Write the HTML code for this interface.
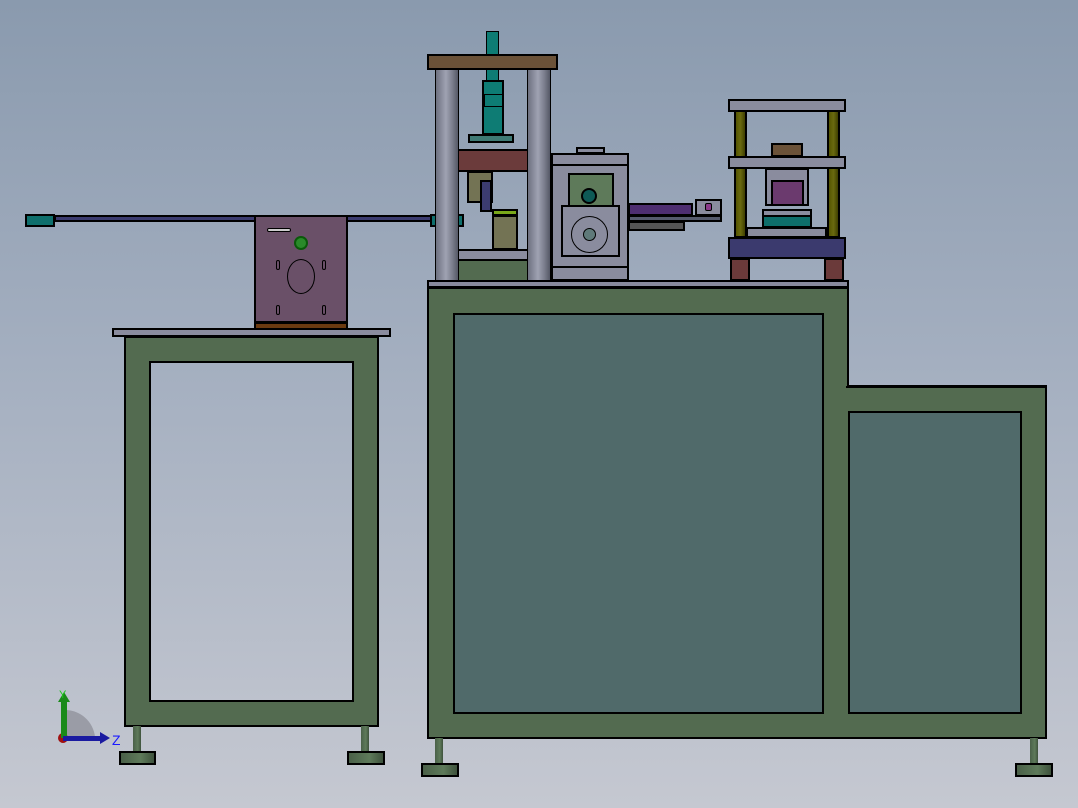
<!DOCTYPE html>
<html><head><style>
html,body{margin:0;width:1078px;height:808px;overflow:hidden;}
body{background:linear-gradient(#8a9aae,#a4afc0 45%,#c5c8d1) fixed;position:relative;font-family:"Liberation Sans",sans-serif;}
.b{position:absolute;box-sizing:border-box;border:2px solid #000;}
.n{position:absolute;box-sizing:border-box;}
.win{background:linear-gradient(#8a9aae,#a4afc0 45%,#c5c8d1) fixed;}
.g{background:#536b50}
.gr{background:#8a8c9e}
.col{background:linear-gradient(90deg,#6e7180,#9fa2b2 45%,#7a7d8c 75%,#555866);}
.ft{background:linear-gradient(90deg,#4a6048,#5e7a5a 60%,#3e523c);}
</style></head><body>
<!-- left arm -->
<div class="b" style="left:54px;top:215px;width:406px;height:7px;background:#3c3c70"></div>
<div class="b" style="left:25px;top:214px;width:30px;height:13px;background:#0f6f6c"></div>
<div class="b" style="left:430px;top:214px;width:34px;height:13px;background:#0f6f6c"></div>
<!-- purple plate -->
<div class="b" style="left:254px;top:215px;width:94px;height:108px;background:#6a5068"></div>
<div class="b" style="left:254px;top:322px;width:94px;height:8px;background:#6b3a10"></div>
<div class="n" style="left:267px;top:228px;width:24px;height:4px;border:1px solid #000;border-radius:3px;background:#ccc"></div>
<div class="n" style="left:294px;top:236px;width:14px;height:14px;border:2px solid #0a5a0a;border-radius:50%;background:#2a8a2a"></div>
<div class="n" style="left:287px;top:259px;width:28px;height:35px;border:1px solid #000;border-radius:50%"></div>
<div class="n" style="left:276px;top:260px;width:4px;height:10px;border:1px solid #000;border-radius:3px"></div>
<div class="n" style="left:322px;top:260px;width:4px;height:10px;border:1px solid #000;border-radius:3px"></div>
<div class="n" style="left:276px;top:305px;width:4px;height:10px;border:1px solid #000;border-radius:3px"></div>
<div class="n" style="left:322px;top:305px;width:4px;height:10px;border:1px solid #000;border-radius:3px"></div>
<!-- left table -->
<div class="b gr" style="left:112px;top:328px;width:279px;height:9px"></div>
<div class="b g" style="left:124px;top:336px;width:255px;height:391px"></div>
<div class="b win" style="left:149px;top:361px;width:205px;height:341px"></div>
<div class="n ft" style="left:133px;top:726px;width:8px;height:26px"></div>
<div class="b ft" style="left:119px;top:751px;width:37px;height:14px"></div>
<div class="n ft" style="left:361px;top:726px;width:8px;height:26px"></div>
<div class="b ft" style="left:347px;top:751px;width:38px;height:14px"></div>
<!-- big press -->
<div class="n" style="left:486px;top:31px;width:13px;height:50px;background:#0e7c74;border:1px solid #000"></div>
<div class="b" style="left:482px;top:80px;width:22px;height:55px;background:#0e7c74"></div>
<div class="n" style="left:482px;top:94px;width:22px;height:13px;border:1.5px solid #000;border-left-width:3px"></div>
<div class="b" style="left:468px;top:134px;width:46px;height:9px;background:#3f7a74"></div>
<div class="b" style="left:457px;top:149px;width:72px;height:23px;background:#6b3b3b"></div>
<div class="b" style="left:467px;top:171px;width:26px;height:32px;background:#737354"></div>
<div class="b" style="left:480px;top:180px;width:12px;height:32px;background:#3c3c70"></div>
<div class="b" style="left:492px;top:209px;width:26px;height:7px;background:#7aa81a"></div>
<div class="b" style="left:492px;top:215px;width:26px;height:35px;background:#737354"></div>
<div class="b gr" style="left:457px;top:249px;width:72px;height:12px"></div>
<div class="n g" style="left:457px;top:261px;width:72px;height:19px"></div>
<div class="b col" style="left:435px;top:67px;width:24px;height:214px;border-width:0 1px"></div>
<div class="b col" style="left:527px;top:67px;width:24px;height:214px;border-width:0 1px"></div>
<div class="b" style="left:427px;top:54px;width:131px;height:16px;background:#6b5238"></div>
<!-- middle box -->
<div class="b" style="left:628px;top:203px;width:65px;height:13px;background:#4e2e70"></div>
<div class="b" style="left:628px;top:215px;width:94px;height:7px;background:#555a6c"></div>
<div class="b" style="left:628px;top:221px;width:57px;height:10px;background:#555"></div>
<div class="b gr" style="left:695px;top:199px;width:27px;height:17px"></div>
<div class="n" style="left:705px;top:203px;width:7px;height:8px;background:#8a3a8a;border:1px solid #000;border-radius:2px"></div>
<div class="b gr" style="left:576px;top:147px;width:29px;height:7px"></div>
<div class="b gr" style="left:551px;top:153px;width:78px;height:128px"></div>
<div class="b gr" style="left:551px;top:153px;width:78px;height:13px"></div>
<div class="b" style="left:568px;top:173px;width:46px;height:34px;background:#5e7a5a"></div>
<div class="n" style="left:581px;top:188px;width:16px;height:16px;border:2px solid #000;border-radius:50%;background:#0e5a56"></div>
<div class="b gr" style="left:561px;top:205px;width:59px;height:52px"></div>
<div class="n" style="left:571px;top:216px;width:37px;height:37px;border:1px solid #000;border-radius:50%"></div>
<div class="n" style="left:583px;top:228px;width:13px;height:13px;border:1px solid #000;border-radius:50%;background:#5f7a7a"></div>
<div class="b gr" style="left:551px;top:266px;width:78px;height:15px"></div>
<!-- right press -->
<div class="b" style="left:734px;top:110px;width:13px;height:128px;background:linear-gradient(90deg,#555500,#6a6a10,#3f3f00)"></div>
<div class="b" style="left:827px;top:110px;width:13px;height:128px;background:linear-gradient(90deg,#555500,#6a6a10,#3f3f00)"></div>
<div class="b gr" style="left:728px;top:99px;width:118px;height:13px"></div>
<div class="b" style="left:771px;top:143px;width:32px;height:14px;background:#6b5238"></div>
<div class="b gr" style="left:728px;top:156px;width:118px;height:13px"></div>
<div class="b gr" style="left:765px;top:168px;width:44px;height:38px"></div>
<div class="b" style="left:771px;top:180px;width:33px;height:26px;background:#6b3a6e"></div>
<div class="b gr" style="left:762px;top:209px;width:50px;height:8px"></div>
<div class="b" style="left:762px;top:215px;width:50px;height:13px;background:#0e6e6a"></div>
<div class="b gr" style="left:746px;top:227px;width:81px;height:11px"></div>
<div class="b" style="left:728px;top:237px;width:118px;height:22px;background:#3b3a6e"></div>
<div class="b" style="left:730px;top:258px;width:20px;height:23px;background:#6b3a3a"></div>
<div class="b" style="left:824px;top:258px;width:20px;height:23px;background:#6b3a3a"></div>
<!-- big table -->
<div class="b gr" style="left:427px;top:280px;width:422px;height:8px"></div>
<div class="n g" style="left:427px;top:287px;width:421px;height:452px;border:2px solid #000;border-right:none"></div>
<div class="b g" style="left:846px;top:386px;width:201px;height:353px;border-left:none"></div>
<div class="n" style="left:847px;top:287px;width:2px;height:100px;background:#000"></div>
<div class="n" style="left:847px;top:385px;width:200px;height:2px;background:#000"></div>
<div class="b" style="left:453px;top:313px;width:371px;height:401px;background:#506a6a"></div>
<div class="b" style="left:848px;top:411px;width:174px;height:303px;background:#506a6a"></div>
<div class="n ft" style="left:435px;top:738px;width:8px;height:26px"></div>
<div class="b ft" style="left:421px;top:763px;width:38px;height:14px"></div>
<div class="n ft" style="left:1030px;top:738px;width:8px;height:26px"></div>
<div class="b ft" style="left:1015px;top:763px;width:38px;height:14px"></div>
<!-- triad -->
<svg class="n" style="left:50px;top:686px" width="70" height="70">
<path d="M15 51 L15 24 A30 30 0 0 1 45 51 Z" fill="#9a9ca6"/>
<circle cx="13" cy="52" r="5" fill="#a01010"/>
<rect x="11" y="14" width="6" height="38" fill="#1a8a1a"/>
<path d="M8 16 L14 6 L20 16 Z" fill="#1a8a1a"/>
<rect x="13" y="50" width="40" height="5" fill="#1a1aa0"/>
<path d="M50 46 L60 52 L50 58 Z" fill="#1a1aa0"/>
<text x="9" y="12" font-size="11" fill="#1ac81a">Y</text>
<text x="62" y="59" font-size="14" fill="#1a1aff">Z</text>
</svg>
</body></html>
